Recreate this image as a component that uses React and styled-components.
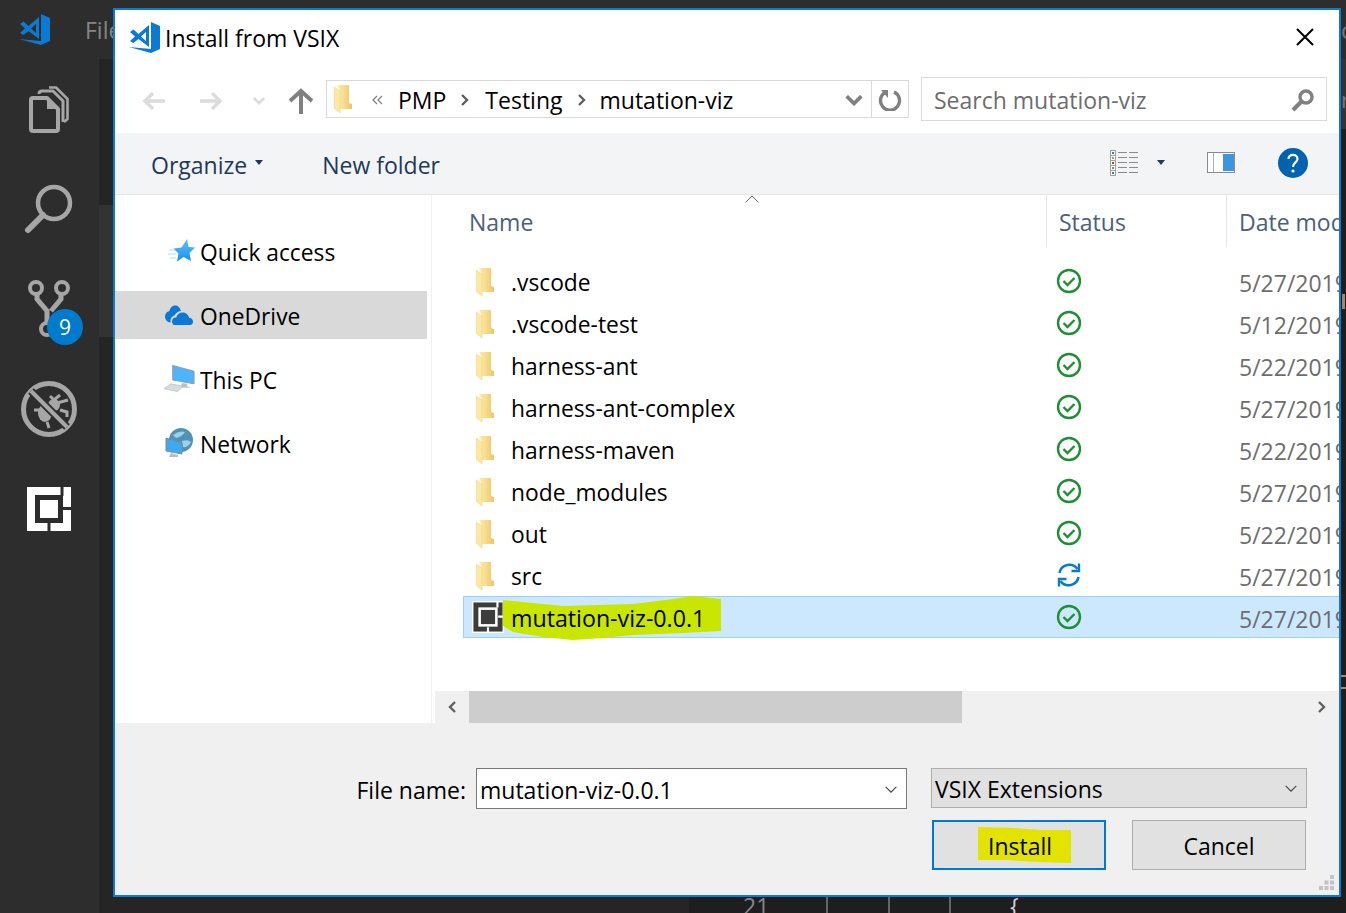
import React from 'react';
import styled, { createGlobalStyle } from 'styled-components';

const GlobalStyle = createGlobalStyle`
  html, body {
    margin: 0;
    padding: 0;
    background: #1e1e1e;
  }
  * {
    box-sizing: border-box;
  }
`;

const FONT = `'Open Sans', 'Noto Sans', sans-serif`;

const Screen = styled.div`
  position: relative;
  width: 1346px;
  height: 913px;
  overflow: hidden;
  display: flex;
  flex-direction: column;
  background: #1e1e1e;
  font-family: ${FONT};
`;

/* the vs code window behind the dialog */
const TitleBar = styled.div`
  height: 59px;
  flex: none;
  background: #2d2d2d;
  display: flex;
  align-items: center;
  padding-left: 19px;
  gap: 34px;
  color: #858585;
  font-size: 23px;
`;

const LogoBox = styled.span`
  display: flex;
  margin-top: -2px;
`;

const EdgeLetter = styled.span`
  margin-left: auto;
  width: 5px;
  overflow: hidden;
  color: #777;
`;

const Workbench = styled.div`
  flex: 1;
  display: flex;
  min-height: 0;
`;

const ActivityBar = styled.div`
  width: 99px;
  flex: none;
  background: #2d2d2d;
  display: flex;
  flex-direction: column;
`;

const ActivitySlot = styled.div`
  position: relative;
  height: 100px;
  padding-right: 1px;
  display: flex;
  align-items: center;
  justify-content: center;
`;

const Badge = styled.span`
  position: absolute;
  left: 47px;
  top: 50px;
  width: 36px;
  height: 36px;
  border-radius: 50%;
  background: #007acc;
  color: #fff;
  font-size: 21px;
  display: flex;
  align-items: center;
  justify-content: center;
`;

const SideBar = styled.div`
  width: 590px;
  flex: none;
  display: flex;
  flex-direction: column;
  background: #252526;
`;

const SideSection = styled.div`
  height: ${(p) => p.$h}px;
  background: ${(p) => p.$bg};
`;

const Editor = styled.div`
  position: relative;
  flex: 1;
  display: flex;
  flex-direction: column;
  color: #858585;
`;

const EditorTabs = styled.div`
  height: 70px;
  flex: none;
  background: #333333;
  padding-top: 10px;
  display: flex;
  align-items: center;
  justify-content: flex-end;
  font-size: 22px;
`;

const EditorBody = styled.div`
  flex: 1;
  display: flex;
  align-items: flex-end;
`;

const CodeLine = styled.div`
  height: 16px;
  display: flex;
  padding-left: 54px;
  font-size: 23px;
  line-height: 18px;
  overflow: hidden;
`;

const LineNumber = styled.span`
  width: 83px;
`;

const IndentGuide = styled.span`
  width: ${(p) => p.$w}px;
  border-left: 2px solid #666;
  color: #d4d4d4;
  padding-left: 59px;
  white-space: nowrap;
`;

const BracketMark = styled.span`
  position: absolute;
  right: 0;
  top: 616px;
  width: 5px;
  height: 14px;
  border-top: 2px solid #a9826c;
  border-bottom: 2px solid #a9826c;
`;

const CodeSliver = styled.span`
  position: absolute;
  right: 1px;
  top: 235px;
  width: 3px;
  height: 15px;
  background: #a9826c;
`;

/* dialog */
const Dialog = styled.div`
  position: absolute;
  left: 113px;
  top: 8px;
  width: 1228px;
  height: 889px;
  border: 2px solid #0a7ad4;
  background: #fff;
  display: flex;
  flex-direction: column;
  overflow: hidden;
  color: #000;
  font-size: 23px;
`;

const DialogTitle = styled.div`
  height: 58px;
  flex: none;
  display: flex;
  align-items: center;
  padding: 0 25px 2px 14px;
  gap: 4px;
  font-size: 23px;
`;

const CloseButton = styled.span`
  margin: -2px 0 0 auto;
  display: flex;
`;

const NavBar = styled.div`
  height: 65px;
  flex: none;
  display: flex;
  align-items: center;
  padding: 0 0 4px 27px;
`;

const NavArrow = styled.span`
  display: flex;
  width: ${(p) => p.$w}px;
  margin-top: 4px;
`;

const AddressBox = styled.div`
  width: 583px;
  height: 38px;
  margin-left: 1px;
  border: 1px solid #d9d9d9;
  display: flex;
  align-items: center;
  padding-left: 7px;
`;

const Crumb = styled.span`
  margin-left: ${(p) => p.$ml}px;
  padding-top: 3px;
  display: flex;
  align-items: center;
  line-height: 1;
`;

const ComboArrow = styled.span`
  margin: 3px 8px 0 auto;
  display: flex;
`;

const AddressEnd = styled.span`
  height: 100%;
  width: 37px;
  border-left: 1px solid #d9d9d9;
  display: flex;
  align-items: center;
  justify-content: center;
`;

const SearchBox = styled.div`
  width: 406px;
  height: 44px;
  margin-left: 12px;
  border: 1px solid #d9d9d9;
  display: flex;
  align-items: center;
  justify-content: space-between;
  padding: 3px 11px 0 12px;
  color: #6d6d6d;
`;

const CommandBar = styled.div`
  height: 62px;
  flex: none;
  background: #f3f4f6;
  border-bottom: 1px solid #e5e5e5;
  display: flex;
  align-items: center;
  padding: 2px 0 0 36px;
  color: #1e395b;
`;

const CommandText = styled.span`
  margin-left: ${(p) => p.$ml || 0}px;
`;

const CommandIcon = styled.span`
  display: flex;
  margin: -4px 0 0 ${(p) => p.$ml}px;
`;

const Main = styled.div`
  flex: 1;
  min-height: 0;
  display: flex;
`;

const NavPane = styled.div`
  width: 317px;
  flex: none;
  border-right: 1px solid #f0f0f0;
  padding-top: 32px;
  display: flex;
  flex-direction: column;
  gap: 16px;
`;

const NavItem = styled.div`
  width: 312px;
  height: 48px;
  padding: 2px 0 0 ${(p) => p.$pl || 50}px;
  display: flex;
  align-items: center;
  font-size: 22.8px;
  background: ${(p) => (p.$active ? '#d9d9d9' : 'transparent')};
`;

const NavIcon = styled.span`
  width: ${(p) => p.$w || 35}px;
  flex: none;
  display: flex;
  margin-top: -2px;
`;

const FilePane = styled.div`
  flex: 1;
  min-width: 0;
  display: flex;
  flex-direction: column;
`;

const ColumnHeader = styled.div`
  position: relative;
  height: 52px;
  flex: none;
  display: flex;
  padding-left: 37px;
  color: #4c607a;
`;

const ColumnCell = styled.span`
  width: ${(p) => p.$w}px;
  flex: none;
  display: flex;
  align-items: center;
  white-space: nowrap;
  padding-top: 2px;
  padding-left: ${(p) => p.$pl || 0}px;
  border-left: ${(p) => (p.$line ? '1px solid #e5e5e5' : 'none')};
`;

const SortCaret = styled.span`
  position: absolute;
  left: 313px;
  top: 0;
  display: flex;
`;

const FileList = styled.div`
  flex: 1;
  padding: 13px 0 0 31px;
`;

const FileRow = styled.div`
  height: 42px;
  padding-top: 4px;
  display: flex;
  align-items: center;
  margin-right: -40px;
  background: ${(p) => (p.$selected ? '#cce8ff' : 'transparent')};
  box-shadow: ${(p) => (p.$selected ? 'inset 0 0 0 1px #99d1ff' : 'none')};
`;

const NameCell = styled.div`
  position: relative;
  width: 583px;
  flex: none;
  display: flex;
  align-items: center;
  padding-left: ${(p) => p.$pl}px;
`;

const IconSlot = styled.span`
  display: flex;
  width: ${(p) => p.$w}px;
  flex: none;
  margin-top: ${(p) => p.$mt}px;
`;

const FileName = styled.span`
  position: relative;
  line-height: 1;
  white-space: nowrap;
  font-size: ${(p) => p.$size || 22.8}px;
`;

const Marker = styled.svg`
  position: absolute;
  left: 40px;
  top: -9px;
`;

const StatusCell = styled.div`
  width: 180px;
  flex: none;
  display: flex;
  padding-left: 10px;
  margin-top: -4px;
`;

const DateCell = styled.div`
  color: #6d6d6d;
  padding-left: 13px;
  white-space: nowrap;
`;

const ScrollBar = styled.div`
  height: 32px;
  flex: none;
  margin-left: 3px;
  background: #f0f0f0;
  display: flex;
  align-items: center;
`;

const ScrollButton = styled.span`
  width: 34px;
  flex: none;
  display: flex;
  justify-content: center;
  margin-left: ${(p) => (p.$end ? 'auto' : 0)};
`;

const ScrollThumb = styled.span`
  width: 493px;
  height: 100%;
  background: #cdcdcd;
`;

const Footer = styled.div`
  position: relative;
  height: 172px;
  flex: none;
  background: #f0f0f0;
  padding: 45px 0 0 242px;
`;

const FormRow = styled.div`
  display: flex;
  align-items: flex-start;
`;

const FormLabel = styled.label`
  width: 109px;
  height: 41px;
  margin-right: 10px;
  padding-top: 2px;
  display: flex;
  align-items: center;
  justify-content: flex-end;
  white-space: nowrap;
`;

const Field = styled.div`
  width: ${(p) => p.$w}px;
  height: ${(p) => p.$h}px;
  margin-left: ${(p) => p.$ml || 0}px;
  border: 1px solid ${(p) => (p.$filled ? '#adadad' : '#7a7a7a')};
  background: ${(p) => (p.$filled ? '#e1e1e1' : '#fff')};
  display: flex;
  align-items: center;
  justify-content: space-between;
  padding: 2px 8px 0 3px;
`;

const ButtonRow = styled.div`
  display: flex;
  gap: 26px;
  margin: 11px 0 0 575px;
`;

const Button = styled.div`
  width: 174px;
  height: 50px;
  display: flex;
  align-items: center;
  justify-content: center;
  padding-top: ${(p) => (p.$primary ? 0 : 2)}px;
  background: #e1e1e1;
  border: ${(p) => (p.$primary ? '2px solid #0078d7' : '1px solid #adadad')};
`;

const ButtonMark = styled.span`
  width: 93px;
  height: 36px;
  margin-left: 11px;
  padding: 2px 0 0 10px;
  display: flex;
  align-items: center;
  background: #e3e300;
  clip-path: polygon(0 0, 40% 3%, 70% 8%, 100% 8%, 100% 100%, 65% 97%, 30% 92%, 0 92%);
`;

const Grip = styled.svg`
  position: absolute;
  right: 4px;
  bottom: 4px;
`;

/* drawings */
const VsLogo = ({ size = 32 }) => (
  <svg width={size} height={size} viewBox="0 0 32 32">
    <path
      fillRule="evenodd"
      fill="#0a7ad4"
      d="M22 1 L31 5 V28 L22 32 L0 26 L22 28 Z M1 11 L4.5 8.5 L9.5 13 L20 4 V26 L9.5 18 L4.5 22 L1 20 L6 15.5 Z M12 15.5 L17 11 V20 Z"
    />
  </svg>
);

const ExplorerIcon = () => (
  <svg width="40" height="47" viewBox="0 0 40 47" fill="none" stroke="#a6a6a6" strokeWidth="4" strokeLinejoin="round">
    <path d="M2 14 Q2 12 4 12 H18 L29 23 V43 Q29 45 27 45 H4 Q2 45 2 43 Z" />
    <path d="M18 12 V23 H29 Z" fill="#a6a6a6" stroke="none" />
    <path d="M10 8 Q10 5 13 5 H24 L34 15 V36" strokeWidth="3" />
    <path d="M20 1.5 H27 L38.5 13 V33 L35 36" strokeWidth="2.6" />
  </svg>
);

const SearchIcon = () => (
  <svg width="52" height="52" viewBox="0 0 52 52" fill="none" stroke="#a6a6a6">
    <circle cx="31" cy="20" r="16" strokeWidth="4.5" />
    <path d="M20 32 L5 47" strokeWidth="6" strokeLinecap="round" />
  </svg>
);

const GitIcon = () => (
  <svg width="44" height="60" viewBox="0 0 44 60" fill="none" stroke="#a6a6a6" strokeWidth="4">
    <circle cx="9" cy="9" r="6" />
    <circle cx="35" cy="9" r="6" />
    <circle cx="20" cy="50" r="6" />
    <path d="M10 15 V20 L20 32 V44 M34 15 V20 L24 32" strokeWidth="5" />
  </svg>
);

const DebugIcon = () => (
  <svg width="56" height="56" viewBox="0 0 56 56" fill="none" stroke="#a6a6a6">
    <circle cx="28" cy="28" r="25.5" strokeWidth="5" />
    <ellipse cx="24" cy="32" rx="7" ry="9" fill="#a6a6a6" stroke="none" />
    <path d="M29 15 L33 19 L39 14 M36 22 L47 19 M39 29 L46 31 V36 M13 29 H20 M26 41 L28 47" strokeWidth="3" />
    <circle cx="33" cy="24" r="6" fill="#a6a6a6" stroke="none" />
    <path d="M10 10 L46 46" stroke="#2d2d2d" strokeWidth="8" />
    <path d="M10 10 L46 46" strokeWidth="4" />
  </svg>
);

const ExtensionGlyph = ({ size, paper, ink, line = 5, frame }) => (
  <svg width={size} height={size} viewBox="0 0 44 44">
    <rect width="44" height="44" fill={paper} />
    {frame && <rect x="1" y="1" width="42" height="42" fill="none" stroke={frame} strokeWidth="2" />}
    <rect x="10.5" y="10.5" width="23" height="23" fill="none" stroke={ink} strokeWidth={line} />
    <path d="M22 36 V44 M36 21.5 H44 M35 0 V9" stroke={ink} strokeWidth="3" />
  </svg>
);

const FolderIcon = () => (
  <svg width="19" height="28" viewBox="0 0 19 28">
    <defs>
      <linearGradient id="folderBody" x1="0" y1="0" x2="1" y2="0">
        <stop offset="0" stopColor="#fdeeb0" />
        <stop offset="1" stopColor="#eec765" />
      </linearGradient>
    </defs>
    <path d="M3 0 H15 V18 L18 19 V24 H6 V6 Z" fill="url(#folderBody)" />
    <path d="M0 2 L6 6 V28 L0 23 Z" fill="#fde9a5" stroke="#f0d27a" strokeWidth="0.6" />
  </svg>
);

const CheckStatus = () => (
  <svg width="26" height="26" viewBox="0 0 26 26" fill="none" stroke="#1e8f33">
    <circle cx="13" cy="13" r="11" strokeWidth="2.4" />
    <path d="M7.5 13 L11.5 17 L18.5 10" strokeWidth="2.4" />
  </svg>
);

const SyncStatus = () => (
  <svg width="26" height="26" viewBox="0 0 26 26" fill="none" stroke="#0a7ad4" strokeWidth="2.6">
    <path d="M3.5 11 A10 10 0 0 1 21.5 7" />
    <path d="M23 1.5 V9 H15.5" strokeWidth="2.4" />
    <path d="M22.5 15 A10 10 0 0 1 4.5 19" />
    <path d="M3 24.5 V17 H10.5" strokeWidth="2.4" />
  </svg>
);

const ArrowLeft = () => (
  <svg width="24" height="20" viewBox="0 0 24 20" fill="none" stroke="#dcdcdc" strokeWidth="3.5">
    <path d="M23 10 H3 M11 2 L3 10 L11 18" />
  </svg>
);

const ArrowRight = () => (
  <svg width="24" height="20" viewBox="0 0 24 20" fill="none" stroke="#dcdcdc" strokeWidth="3.5">
    <path d="M1 10 H21 M13 2 L21 10 L13 18" />
  </svg>
);

const ArrowUp = () => (
  <svg width="26" height="26" viewBox="0 0 26 26" fill="none" stroke="#808080" strokeWidth="4">
    <path d="M13 26 V4 M2 13 L13 3 L24 13" />
  </svg>
);

const Chevron = ({ w = 14, h = 9, color = '#808080', sw = 3 }) => (
  <svg width={w} height={h} viewBox="0 0 14 9" fill="none" stroke={color} strokeWidth={sw}>
    <path d="M1 1 L7 7 L13 1" />
  </svg>
);

const CrumbArrow = () => (
  <svg width="10" height="14" viewBox="0 0 10 14" fill="none" stroke="#5f5f5f" strokeWidth="2.4">
    <path d="M2 2 L7 7 L2 12" />
  </svg>
);

const RefreshIcon = () => (
  <svg width="24" height="24" viewBox="0 0 24 24" fill="none" stroke="#808080">
    <path d="M8 5 A9.5 9.5 0 1 0 16 5" strokeWidth="3.4" />
    <path d="M3 3 H10 V11 Z" fill="#808080" stroke="none" />
  </svg>
);

const KeyIcon = () => (
  <svg width="24" height="24" viewBox="0 0 24 24" fill="none" stroke="#808080">
    <circle cx="15" cy="9" r="6" strokeWidth="3.4" />
    <path d="M10 14 L2 22" strokeWidth="4" />
  </svg>
);

const Caret = () => (
  <svg width="8" height="5" viewBox="0 0 8 5">
    <path d="M0 0 H8 L4 5 Z" fill="#1e395b" />
  </svg>
);

const ViewIcon = () => (
  <svg width="28" height="26" viewBox="0 0 28 26">
    {['#3b78c4', '#a0a060', '#d03020', '#70a040', '#3b78c4'].map((c, i) => (
      <g key={c + i}>
        <rect x="0.5" y={0.5 + i * 5} width="5" height="5" fill="#fff" stroke="#a0a0a0" />
        <rect x="2" y={2 + i * 5} width="2" height="2" fill={c} />
        <rect x="8" y={2 + i * 5} width="9" height="1" fill="#8a8a8a" />
        <rect x="19" y={2 + i * 5} width="9" height="1" fill="#8a8a8a" />
      </g>
    ))}
  </svg>
);

const PaneIcon = () => (
  <svg width="28" height="21" viewBox="0 0 28 21">
    <rect x="0.5" y="0.5" width="27" height="20" fill="#fff" stroke="#8a8a8a" />
    <rect x="6" y="1" width="1" height="19" fill="#b0b0b0" />
    <rect x="16" y="2" width="11" height="17" fill="#3d94e0" />
  </svg>
);

const HelpIcon = () => (
  <svg width="30" height="30" viewBox="0 0 30 30">
    <circle cx="15" cy="15" r="15" fill="#0063b1" />
    <path d="M10.5 11 C10.5 5.5 19.5 5.5 19.5 11 C19.5 14.5 15 14.5 15 19" fill="none" stroke="#fff" strokeWidth="2.2" />
    <circle cx="15" cy="23" r="1.6" fill="#fff" />
  </svg>
);

const StarIcon = () => (
  <svg width="28" height="26" viewBox="2 0 28 26">
    <defs>
      <linearGradient id="starFill" x1="0" y1="0" x2="0" y2="1">
        <stop offset="0" stopColor="#5cc3ff" />
        <stop offset="1" stopColor="#1a8fe8" />
      </linearGradient>
    </defs>
    <path d="M21 1 L22.5 9 L29 9.5 L23.5 15 L25 23 L17.5 19 L11 23.5 L12.5 15.5 L7.5 10.5 L15.5 9.5 Z" fill="url(#starFill)" />
    <path d="M3 12 H9 M2 16 H10 M4 20 H10" stroke="#a8dcff" strokeWidth="1" />
  </svg>
);

const CloudIcon = () => (
  <svg width="28" height="20" viewBox="0 0 28 20" fill="#0a78d6">
    <path d="M9 20 H25 C27 20 28 18.5 28 16.5 C28 14 26 12.7 24 12.7 C23.5 9.5 20.5 7.5 17.5 7.5 C14.5 7.5 12 9.5 11.2 12.5 C9 12.3 7 14 7 16.5 C7 18 7.7 19.4 9 20 Z" />
    <path d="M5.6 17.5 C5 13.5 7 11 9.5 10.5 C11 7.5 13.5 6 16 6 C15 2.5 13 0.5 10.5 0.5 C7.5 0.5 5 2.5 4.5 6 C2 6.5 0 8.5 0 11.5 C0 14.7 2.5 17.5 5.6 17.5 Z" />
  </svg>
);

const ComputerIcon = () => (
  <svg width="31" height="28" viewBox="0 0 32 28">
    <path d="M9 0 L31 6 V19 L9 15 Z" fill="#4db5fb" stroke="#8c9aa6" strokeWidth="1" />
    <path d="M18 18 L24 19 V22 L29 23 L18 23 Z" fill="#b8c2ca" />
    <path d="M0 24 L7 19 L20 21.5 L14 27 Z" fill="#d8dcdf" stroke="#aab2b8" strokeWidth="0.6" />
  </svg>
);

const NetworkIcon = () => (
  <svg width="28" height="30" viewBox="0 0 28 30">
    <circle cx="16" cy="12" r="12" fill="#4f93b8" />
    <path d="M8 7 Q14 2 20 4 Q17 9 11 10 Z M17 13 Q23 11 26 14 Q23 20 18 19 Z" fill="#9fd0e4" />
    <path d="M1 10 L17 15 V26 L1 23 Z" fill="#3ea9ef" stroke="#7f8c96" strokeWidth="1" />
    <path d="M6 25 L13 27 V29 L4 29 Z" fill="#b5bec5" />
  </svg>
);

const files = [
  { name: '.vscode', date: '5/27/2019' },
  { name: '.vscode-test', date: '5/12/2019' },
  { name: 'harness-ant', date: '5/22/2019' },
  { name: 'harness-ant-complex', date: '5/27/2019' },
  { name: 'harness-maven', date: '5/22/2019' },
  { name: 'node_modules', date: '5/27/2019' },
  { name: 'out', date: '5/22/2019' },
  { name: 'src', date: '5/27/2019', syncing: true },
];

export default function App() {
  return (
    <>
      <GlobalStyle />
      <Screen>
        <TitleBar>
          <LogoBox><VsLogo /></LogoBox>
          <span>File</span>
          <EdgeLetter>c</EdgeLetter>
        </TitleBar>
        <Workbench>
          <ActivityBar>
            <ActivitySlot><ExplorerIcon /></ActivitySlot>
            <ActivitySlot><SearchIcon /></ActivitySlot>
            <ActivitySlot>
              <GitIcon />
              <Badge>9</Badge>
            </ActivitySlot>
            <ActivitySlot><DebugIcon /></ActivitySlot>
            <ActivitySlot><ExtensionGlyph size={44} paper="#fff" ink="#2d2d2d" /></ActivitySlot>
          </ActivityBar>
          <SideBar>
            <SideSection $h={146} $bg="#252526" />
            <SideSection $h={132} $bg="#333333" />
          </SideBar>
          <Editor>
            <EditorTabs>
              <EdgeLetter>r</EdgeLetter>
            </EditorTabs>
            <EditorBody>
              <CodeLine>
                <LineNumber>21</LineNumber>
                <IndentGuide $w={62} />
                <IndentGuide $w={61} />
                <IndentGuide $w={80}>{'{'}</IndentGuide>
              </CodeLine>
            </EditorBody>
            <CodeSliver />
            <BracketMark />
          </Editor>
        </Workbench>

        <Dialog>
          <DialogTitle>
            <LogoBox><VsLogo /></LogoBox>
            <span>Install from VSIX</span>
            <CloseButton>
              <svg width="18" height="18" viewBox="0 0 18 18" stroke="#000" strokeWidth="2">
                <path d="M1 1 L17 17 M17 1 L1 17" />
              </svg>
            </CloseButton>
          </DialogTitle>

          <NavBar>
            <NavArrow $w={57}><ArrowLeft /></NavArrow>
            <NavArrow $w={54}><ArrowRight /></NavArrow>
            <NavArrow $w={35}><Chevron w={12} h={8} color="#dcdcdc" /></NavArrow>
            <NavArrow $w={37}><ArrowUp /></NavArrow>
            <AddressBox>
              <FolderIcon />
              <Crumb $ml={19}>
                <svg width="12" height="10" viewBox="0 0 12 10" fill="none" stroke="#808080" strokeWidth="1.3">
                  <path d="M5 1 L1 5 L5 9 M10 1 L6 5 L10 9" />
                </svg>
              </Crumb>
              <Crumb $ml={14}>PMP</Crumb>
              <Crumb $ml={14}><CrumbArrow /></Crumb>
              <Crumb $ml={15}>Testing</Crumb>
              <Crumb $ml={14}><CrumbArrow /></Crumb>
              <Crumb $ml={13}>mutation-viz</Crumb>
              <ComboArrow><Chevron w={18} h={11} /></ComboArrow>
              <AddressEnd><RefreshIcon /></AddressEnd>
            </AddressBox>
            <SearchBox>
              <span>Search mutation-viz</span>
              <KeyIcon />
            </SearchBox>
          </NavBar>

          <CommandBar>
            <CommandText>Organize</CommandText>
            <CommandIcon $ml={8}><Caret /></CommandIcon>
            <CommandText $ml={59}>New folder</CommandText>
            <CommandIcon $ml={670}><ViewIcon /></CommandIcon>
            <CommandIcon $ml={19}><Caret /></CommandIcon>
            <CommandIcon $ml={42}><PaneIcon /></CommandIcon>
            <CommandIcon $ml={43}><HelpIcon /></CommandIcon>
          </CommandBar>

          <Main>
            <NavPane>
              <NavItem $pl={53}>
                <NavIcon $w={32}><StarIcon /></NavIcon>
                Quick access
              </NavItem>
              <NavItem $active>
                <NavIcon><CloudIcon /></NavIcon>
                OneDrive
              </NavItem>
              <NavItem $pl={49}>
                <NavIcon $w={36}><ComputerIcon /></NavIcon>
                This PC
              </NavItem>
              <NavItem>
                <NavIcon><NetworkIcon /></NavIcon>
                Network
              </NavItem>
            </NavPane>

            <FilePane>
              <ColumnHeader>
                <ColumnCell $w={577}>Name</ColumnCell>
                <ColumnCell $w={180} $pl={12} $line>Status</ColumnCell>
                <ColumnCell $w={200} $pl={12} $line>Date modified</ColumnCell>
                <SortCaret>
                  <svg width="14" height="8" viewBox="0 0 14 8" fill="none" stroke="#6d6d6d" strokeWidth="1">
                    <path d="M0.5 7.5 L7 1 L13.5 7.5" />
                  </svg>
                </SortCaret>
              </ColumnHeader>

              <FileList>
                {files.map((f) => (
                  <FileRow key={f.name}>
                    <NameCell $pl={13}>
                      <IconSlot $w={35} $mt={-2}><FolderIcon /></IconSlot>
                      <FileName>{f.name}</FileName>
                    </NameCell>
                    <StatusCell>{f.syncing ? <SyncStatus /> : <CheckStatus />}</StatusCell>
                    <DateCell>{f.date}</DateCell>
                  </FileRow>
                ))}
                <FileRow $selected>
                  <NameCell $pl={9}>
                    <IconSlot $w={39} $mt={-4}>
                      <ExtensionGlyph size={32} paper="#3c3c3c" ink="#fff" line={3.5} frame="#fff" />
                    </IconSlot>
                    <Marker width="218" height="45" viewBox="0 0 218 45">
                      <path
                        d="M0 4 L30 7 L60 10 L130 8 L170 3 L190 0 L218 3 V35 L180 37 L130 39 L100 42 L70 44 L40 41 L10 36 L0 30 Z"
                        fill="#c9e600"
                      />
                    </Marker>
                    <FileName $size={23.2}>mutation-viz-0.0.1</FileName>
                  </NameCell>
                  <StatusCell><CheckStatus /></StatusCell>
                  <DateCell>5/27/2019</DateCell>
                </FileRow>
              </FileList>

              <ScrollBar>
                <ScrollButton>
                  <svg width="10" height="14" viewBox="0 0 10 14" fill="none" stroke="#606060" strokeWidth="2.4">
                    <path d="M8 2 L3 7 L8 12" />
                  </svg>
                </ScrollButton>
                <ScrollThumb />
                <ScrollButton $end>
                  <svg width="10" height="14" viewBox="0 0 10 14" fill="none" stroke="#606060" strokeWidth="2.4">
                    <path d="M2 2 L7 7 L2 12" />
                  </svg>
                </ScrollButton>
              </ScrollBar>
            </FilePane>
          </Main>

          <Footer>
            <FormRow>
              <FormLabel>File name:</FormLabel>
              <Field $w={431} $h={41}>
                mutation-viz-0.0.1
                <Chevron w={14} h={8} color="#444" sw={1.3} />
              </Field>
              <Field $w={376} $h={40} $ml={24} $filled>
                VSIX Extensions
                <Chevron w={14} h={8} color="#444" sw={1.3} />
              </Field>
            </FormRow>
            <ButtonRow>
              <Button $primary>
                <ButtonMark>Install</ButtonMark>
              </Button>
              <Button>Cancel</Button>
            </ButtonRow>
            <Grip width="16" height="16" viewBox="0 0 16 16" fill="#c4c4c4">
              <rect x="11" y="0" width="4" height="4" />
              <rect x="5.5" y="5.5" width="4" height="4" />
              <rect x="11" y="5.5" width="4" height="4" />
              <rect x="0" y="11" width="4" height="4" />
              <rect x="5.5" y="11" width="4" height="4" />
              <rect x="11" y="11" width="4" height="4" />
            </Grip>
          </Footer>
        </Dialog>
      </Screen>
    </>
  );
}
